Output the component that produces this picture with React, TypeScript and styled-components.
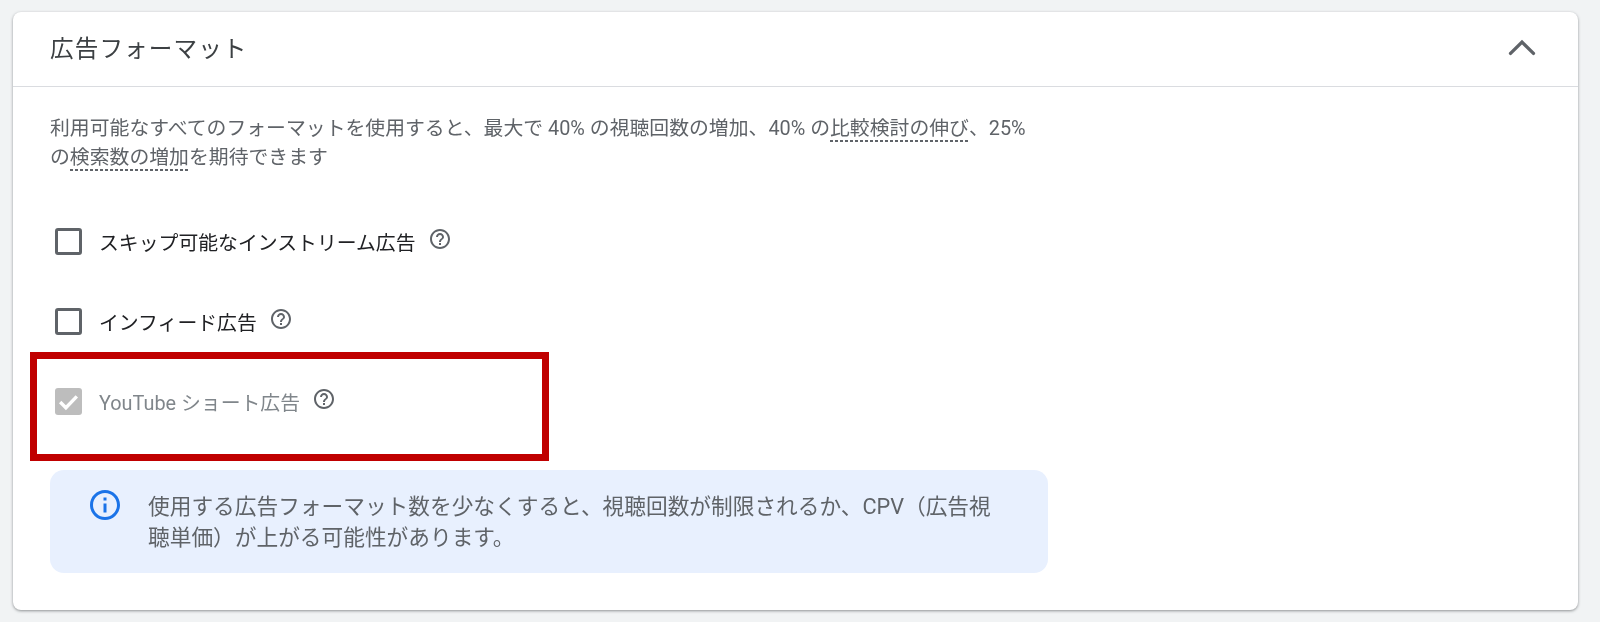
import { createGlobalStyle } from 'styled-components'
import styled from 'styled-components'

const GlobalStyle = createGlobalStyle`
  html, body {
    margin: 0;
    padding: 0;
    background: #f1f3f4;
  }
  body {
    font-family: Roboto, "Noto Sans CJK JP", "Noto Sans", sans-serif;
  }
`

const Page = styled.div`
  width: 1600px;
  height: 622px;
  box-sizing: border-box;
  padding: 12px 22px 12px 13px;
  overflow: hidden;
  filter: blur(0.45px);
`

const Card = styled.section`
  position: relative;
  height: 598px;
  background: #fff;
  border-radius: 8px;
  box-shadow: 0 1px 3px rgba(60, 64, 67, 0.55);
`

const Header = styled.header`
  height: 75px;
  box-sizing: border-box;
  padding: 0 37px 4px;
  display: flex;
  align-items: center;
  justify-content: space-between;
  border-bottom: 1px solid #dadce0;
`

const Title = styled.h2`
  margin: 0;
  font-size: 23.6px;
  font-weight: 400;
  letter-spacing: 1.1px;
  color: #3c4043;
`

const Chevron = styled.svg`
  width: 50px;
  height: 50px;
  margin: 2px -6px 0 0;
  fill: none;
  stroke: #5f6368;
  stroke-width: 1.6;
  stroke-linecap: round;
`

const Body = styled.div`
  padding: 28px 37px 0;
  width: 998px;
`

const Description = styled.p`
  margin: 0 0 56px;
  max-width: 985px;
  font-size: 19.85px;
  line-height: 28.5px;
  color: #5f6368;
`

const Term = styled.span`
  padding-bottom: 2px;
  background: repeating-linear-gradient(90deg, #5f6368 0 3px, transparent 3px 5px) left bottom / 100% 2px no-repeat;
`

const Options = styled.div`
  display: flex;
  flex-direction: column;
  gap: 53px;
  margin-left: 5px;
`

const Option = styled.label<{ $disabled?: boolean }>`
  display: flex;
  align-items: center;
  height: 27px;
  font-size: 19.85px;
  color: ${({ $disabled }) => ($disabled ? '#80868b' : '#202124')};
`

const Box = styled.span<{ $checked?: boolean }>`
  width: 27px;
  height: 27px;
  box-sizing: border-box;
  flex: none;
  margin-right: 17px;
  border-radius: 3px;
  border: ${({ $checked }) => ($checked ? 'none' : '3px solid #5f6368')};
  background: ${({ $checked }) => ($checked ? '#bdbdbd' : '#fff')};
  display: flex;
  align-items: center;
  justify-content: center;
`

const Tick = styled.svg`
  width: 25px;
  height: 25px;
  fill: none;
  stroke: #fff;
  stroke-width: 3.2;
`

const HelpIcon = styled.svg`
  width: 24px;
  height: 24px;
  flex: none;
  margin: 0 0 6px 12px;
  fill: #5f6368;
`

const Highlight = styled.div`
  position: absolute;
  left: 17px;
  top: 340px;
  width: 519px;
  height: 109px;
  box-sizing: border-box;
  border: 7px solid #c00000;
`

const Notice = styled.div`
  margin-top: 55px;
  width: 998px;
  height: 103px;
  box-sizing: border-box;
  padding: 21px 42px 0 38px;
  display: flex;
  background: #e8f0fe;
  border-radius: 14px;
`

const InfoIcon = styled.svg`
  width: 36px;
  height: 36px;
  flex: none;
  margin: -4px 25px 0 -1px;
  fill: #1a73e8;
`

const NoticeText = styled.p`
  margin: 0;
  font-size: 21.7px;
  line-height: 31px;
  color: #5f6368;
`

const HELP_PATH =
  'M11 18h2v-2h-2v2zm1-16C6.48 2 2 6.48 2 12s4.48 10 10 10 10-4.48 10-10S17.52 2 12 2zm0 18c-4.41 0-8-3.59-8-8s3.59-8 8-8 8 3.59 8 8-3.59 8-8 8zm0-14c-2.21 0-4 1.79-4 4h2c0-1.1.9-2 2-2s2 .9 2 2c0 2-3 1.75-3 5h2c0-2.25 3-2.5 3-5 0-2.21-1.79-4-4-4z'

function Help() {
  return (
    <HelpIcon viewBox="0 0 24 24" aria-label="help">
      <path d={HELP_PATH} />
    </HelpIcon>
  )
}

export default function App() {
  return (
    <Page>
      <GlobalStyle />
      <Card>
        <Header>
          <Title>広告フォーマット</Title>
          <Chevron viewBox="0 0 24 24" aria-label="collapse">
            <path d="M6.5 14.6L12 9.2l5.5 5.4" />
          </Chevron>
        </Header>
        <Body>
          <Description>
            利用可能なすべてのフォーマットを使用すると、最大で 40% の視聴回数の増加、40% の<Term>比較検討の伸び</Term>、25% の
            <Term>検索数の増加</Term>を期待できます
          </Description>
          <Options>
            <Option>
              <Box />
              スキップ可能なインストリーム広告
              <Help />
            </Option>
            <Option>
              <Box />
              インフィード広告
              <Help />
            </Option>
            <Option $disabled>
              <Box $checked>
                <Tick viewBox="0 0 24 24">
                  <path d="M4 12.5l5.5 5.5L20 7" />
                </Tick>
              </Box>
              YouTube ショート広告
              <Help />
            </Option>
          </Options>
          <Notice>
            <InfoIcon viewBox="0 0 24 24" aria-label="info">
              <path d="M11 7h2v2h-2zm0 4h2v6h-2zm1-9C6.48 2 2 6.48 2 12s4.48 10 10 10 10-4.48 10-10S17.52 2 12 2zm0 18c-4.41 0-8-3.59-8-8s3.59-8 8-8 8 3.59 8 8-3.59 8-8 8z" />
            </InfoIcon>
            <NoticeText>
              使用する広告フォーマット数を少なくすると、視聴回数が制限されるか、CPV（広告視聴単価）が上がる可能性があります。
            </NoticeText>
          </Notice>
        </Body>
        <Highlight />
      </Card>
    </Page>
  )
}
